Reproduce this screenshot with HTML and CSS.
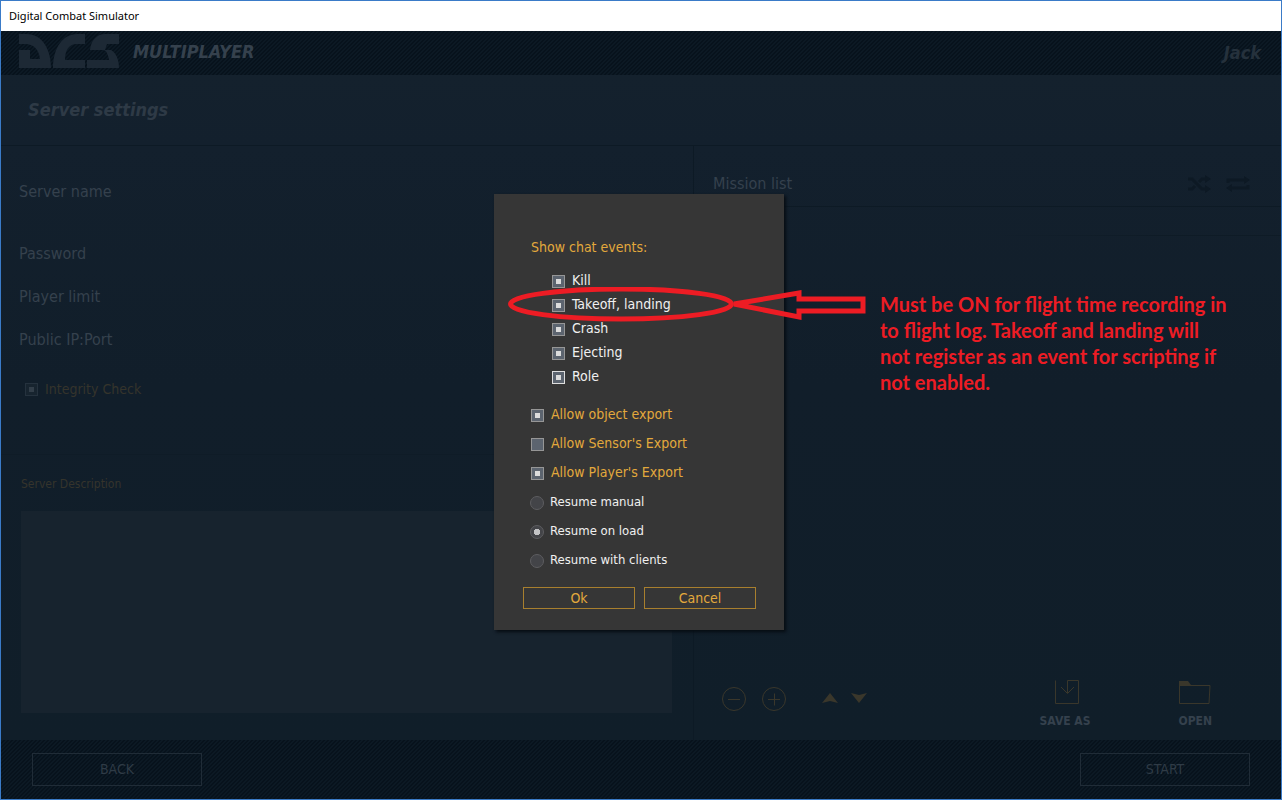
FILE: index.html
```html
<!DOCTYPE html>
<html lang="en">
<head>
<meta charset="utf-8">
<title>Digital Combat Simulator</title>
<link rel="stylesheet" href="styles.css">
</head>
<body>
<div class="window">
  <div class="titlebar">Digital Combat Simulator</div>
  <div class="screen">
    <header class="topbar">
      <svg class="logo" viewBox="0 0 100 34" aria-label="DCS">
        <path d="M0 0H8C22 0 32 14 32 34H0V16H11V25H21C20 15 14 10 6 10H0Z"/>
        <path d="M66 0V10H58C50 10 46 16 46 26H66V34H34C34 14 44 0 58 0Z"/>
        <path d="M100 0V10H88L86 16H92C97 19 100 25 100 34H68V26H90C89 20 87 16 84 16H71C72 6 78 0 86 0Z"/>
      </svg>
      <h1 class="mode">MULTIPLAYER</h1>
      <span class="player">Jack</span>
    </header>
    <div class="subhead"><h2>Server settings</h2></div>
    <main class="main">
      <section class="left">
        <div class="form">
          <div class="field name">Server name</div>
          <div class="field">Password</div>
          <div class="field">Player limit</div>
          <div class="field">Public IP:Port</div>
          <label class="integrity"><input type="checkbox" class="box dim" checked>Integrity Check</label>
        </div>
        <div class="description">
          <label for="desc">Server Description</label>
          <textarea id="desc"></textarea>
        </div>
      </section>
      <section class="right">
        <div class="missions">
          <h3>Mission list</h3>
          <button class="plain" aria-label="Shuffle"><svg class="order" viewBox="0 0 24 20"><path d="M1 5H5L15 15H19M1 15H5L8 12M12 8L15 5H19"/><path class="fill" d="M18 1L24 5L18 9ZM18 11L24 15L18 19Z"/></svg></button>
          <button class="plain" aria-label="Repeat"><svg class="order" viewBox="0 0 24 20"><path d="M2 9V6H19M22 11V14H5"/><path class="fill" d="M18 2L24 6L18 10ZM6 10L0 14L6 18Z"/></svg></button>
        </div>
        <div class="list"></div>
        <div class="tools">
          <button class="plain" aria-label="Remove"><svg class="round" viewBox="0 0 24 24"><circle cx="12" cy="12" r="11.5"/><path d="M6 12.5H18"/></svg></button>
          <button class="plain" aria-label="Add"><svg class="round" viewBox="0 0 24 24"><circle cx="12" cy="12" r="11.5"/><path d="M6 12.5H18M12.5 6.5V18.5"/></svg></button>
          <div class="moves">
            <button class="plain" aria-label="Move up"><svg class="arrow" viewBox="0 0 16 10"><path d="M8 0L16 10L8 8L0 10Z"/></svg></button>
            <button class="plain" aria-label="Move down"><svg class="arrow" viewBox="0 0 16 10"><path d="M8 10L16 0L8 2L0 0Z"/></svg></button>
          </div>
          <div class="files">
            <button class="plain file"><svg class="fileicon" viewBox="0 0 32 24"><path d="M6.5 .5V23.5H29.5V.5H18.5V13M12 7L18.5 13.5L25 7"/></svg>SAVE AS</button>
            <button class="plain file"><svg class="fileicon" viewBox="0 0 32 24"><path d="M.5 5.5H31L30 23.5H.5Z"/><path class="fill" d="M0 6V1H9L12 5V6Z"/></svg>OPEN</button>
          </div>
        </div>
      </section>
    </main>
    <footer class="bottombar">
      <button class="nav">BACK</button>
      <button class="nav">START</button>
    </footer>

    <div class="overlay">
      <div class="dialog" role="dialog" aria-label="Show chat events">
        <p class="caption">Show chat events:</p>
        <div class="events">
          <label><input type="checkbox" class="box" checked>Kill</label>
          <label><input type="checkbox" class="box" checked>Takeoff, landing</label>
          <label><input type="checkbox" class="box" checked>Crash</label>
          <label><input type="checkbox" class="box" checked>Ejecting</label>
          <label><input type="checkbox" class="box hot" checked>Role</label>
        </div>
        <div class="options">
          <label><input type="checkbox" class="box" checked>Allow object export</label>
          <label><input type="checkbox" class="box">Allow Sensor's Export</label>
          <label><input type="checkbox" class="box" checked>Allow Player's Export</label>
          <label class="resume"><input type="radio" name="resume" class="dot">Resume manual</label>
          <label class="resume"><input type="radio" name="resume" class="dot" checked>Resume on load</label>
          <label class="resume"><input type="radio" name="resume" class="dot">Resume with clients</label>
        </div>
        <div class="actions">
          <button>Ok</button>
          <button>Cancel</button>
        </div>
        <svg class="mark" viewBox="0 0 360 36" aria-hidden="true">
          <ellipse cx="113" cy="17" rx="110.5" ry="15"/>
          <path d="M226 17L291 6V12H355V24H291V30Z"/>
        </svg>
        <p class="note">Must be ON for flight time recording in<br>to flight log. Takeoff and landing will<br>not register as an event for scripting if<br>not enabled.</p>
      </div>
    </div>
  </div>
</div>
</body>
</html>
```
FILE: styles.css
```css
* { box-sizing: border-box; }
body { margin: 0; font-family: "DejaVu Sans Condensed", "DejaVu Sans", sans-serif; font-stretch: condensed; }
h1, h2, h3, p { margin: 0; }
button { font-family: inherit; font-stretch: inherit; background: none; cursor: pointer; }
.window { min-height: 100vh; display: flex; flex-direction: column; border: 1px solid #3a7bc8; background: #111e2a; }
.titlebar { height: 30px; padding-left: 8px; line-height: 30px; background: #fff; color: #000; font-family: "Noto Sans", sans-serif; font-size: 11px; font-stretch: normal; }
.screen { flex: 1; display: flex; flex-direction: column; position: relative; color: #35414d; }

.topbar, .bottombar { display: flex; align-items: center; background: linear-gradient(135deg, #0c1924 0 37%, #07121c 37% 50%, #0c1924 50% 87%, #07121c 87%) 0 0 / 4px 4px; }
.topbar { height: 44px; padding: 0 20px 4px 18px; }
.logo { width: 100px; height: 34px; fill: #1d2935; }
.mode { margin-left: 14px; font-size: 18px; font-style: italic; line-height: 20px; padding-top: 2px; }
.player { margin-left: auto; padding-top: 3px; font-size: 18px; line-height: 20px; font-weight: bold; font-style: italic; color: #25313c; }
.subhead { height: 71px; padding-left: 27px; background: linear-gradient(#14212d, #13202d); border-bottom: 1px solid #0d1a25; }
.subhead h2 { font-size: 18px; font-style: italic; line-height: 70px; color: #2e3a46; }

.main { flex: 1; display: grid; grid-template-columns: 692fr 588fr; background: linear-gradient(#13202d, #111e2a 40%, #101e29); }
.left { display: flex; flex-direction: column; }
.form { height: 309px; padding: 24px 0 0 18px; border-bottom: 1px solid #0f1c27; font-size: 16px; }
.field { line-height: 43px; }
.name { margin-bottom: 19px; }
.integrity { display: flex; align-items: center; gap: 7px; height: 56px; padding-left: 6px; font-size: 14px; color: #35342c; }
.description { flex: 1; display: flex; flex-direction: column; padding: 19px 21px 27px 20px; font-size: 12px; color: #35342c; }
.description label { line-height: 20px; }
.description textarea { flex: 1; margin-top: 17px; border: 0; resize: none; background: #17232e; color: #323e4a; }

.right { display: flex; flex-direction: column; border-left: 1px solid #0d1a25; }
.missions { height: 61px; display: flex; align-items: center; gap: 15px; padding: 15px 31px 0 19px; border-bottom: 1px solid #0d1a25; }
.missions h3 { flex: 1; font-size: 16px; font-weight: normal; line-height: 20px; }
.plain { display: flex; align-items: center; padding: 0; border: 0; color: inherit; }
.order { width: 24px; height: 20px; fill: none; stroke: #0d1924; stroke-width: 3; }
.order .fill { fill: #0d1924; stroke: none; }
.list { flex: 1; background: linear-gradient(90deg, transparent, #0e1b26 60%) right 28px / 50% 1px no-repeat; }
.tools { display: flex; align-items: flex-start; gap: 16px; height: 65px; padding: 0 69px 0 28px; fill: none; stroke: #3a372b; }
.tools > .plain, .moves { height: 48px; }
.round { width: 24px; height: 24px; overflow: visible; }
.moves { display: flex; align-items: center; gap: 13px; margin-left: 20px; padding-bottom: 2px; }
.arrow { width: 16px; height: 10px; fill: #3a372b; stroke: none; }
.files { flex: 1; display: flex; justify-content: flex-end; gap: 88px; padding-top: 5px; }
.file { flex-direction: column; gap: 9px; font-size: 12px; font-weight: bold; line-height: 16px; }
.fileicon { width: 32px; height: 24px; }
.fileicon .fill { fill: #3a372b; stroke: none; }

.bottombar { height: 59px; justify-content: space-between; padding: 0 31px; }
.nav { width: 170px; height: 33px; padding: 0 0 2px; border: 1px solid #202c37; color: #2f3b46; font-size: 14px; }

.overlay { position: absolute; inset: 0; display: flex; align-items: center; justify-content: center; padding: 0 4px 6px 0; }
.dialog { position: relative; width: 290px; padding: 43px 28px 21px 29px; background: #363636; box-shadow: 2px 2px 3px #060c12; color: #f0f0f0; }
.caption { padding-left: 8px; line-height: 20px; font-size: 14px; color: #e3a93c; }
.events { margin-top: 12px; padding-left: 29px; font-size: 14px; }
.events label, .options label { display: flex; align-items: center; gap: 7px; }
.events label { height: 24px; padding-bottom: 2px; }
.options { margin-top: 12px; padding-left: 8px; font-size: 14px; color: #e3a93c; }
.options label { height: 29px; padding-bottom: 4px; }
.options .resume { gap: 6px; padding-bottom: 2px; color: #f0f0f0; font-size: 13px; }
.box { appearance: none; width: 13px; height: 13px; margin: 0; border: 1px solid #969696; background: #5c646f; }
.events .box { margin-top: 2px; }
.options .box { margin-top: 4px; }
.box:checked { background: linear-gradient(#dcdcdc, #dcdcdc) center / 5px 5px no-repeat #5c646f; }
.hot { border-color: #dedede; }
.dim, .dim:checked { border-color: #25323e; background-color: #17242f; }
.dim:checked { background-image: linear-gradient(#323e49, #323e49); }
.dot { appearance: none; width: 14px; height: 14px; margin: 2px 0 0 -1px; border: 1px solid #5d5d60; border-radius: 50%; background: #434448; }
.dot:checked { background: radial-gradient(circle, #c4c4c6 0 3px, #434448 3px); }
.actions { display: grid; grid-template-columns: 1fr 1fr; gap: 9px; margin-top: 12px; }
.actions button { height: 22px; padding: 0; border: 1px solid #a87f2e; color: #e3a93c; font-size: 14px; }

.mark { position: absolute; left: 14px; top: 93px; width: 360px; height: 36px; fill: none; stroke: #ed1c24; stroke-width: 5; pointer-events: none; }
.note { position: absolute; left: 386px; top: 97px; white-space: nowrap; color: #ed1c24; font-family: Lato, sans-serif; font-weight: bold; font-stretch: normal; font-size: 20px; line-height: 26px; }
```
